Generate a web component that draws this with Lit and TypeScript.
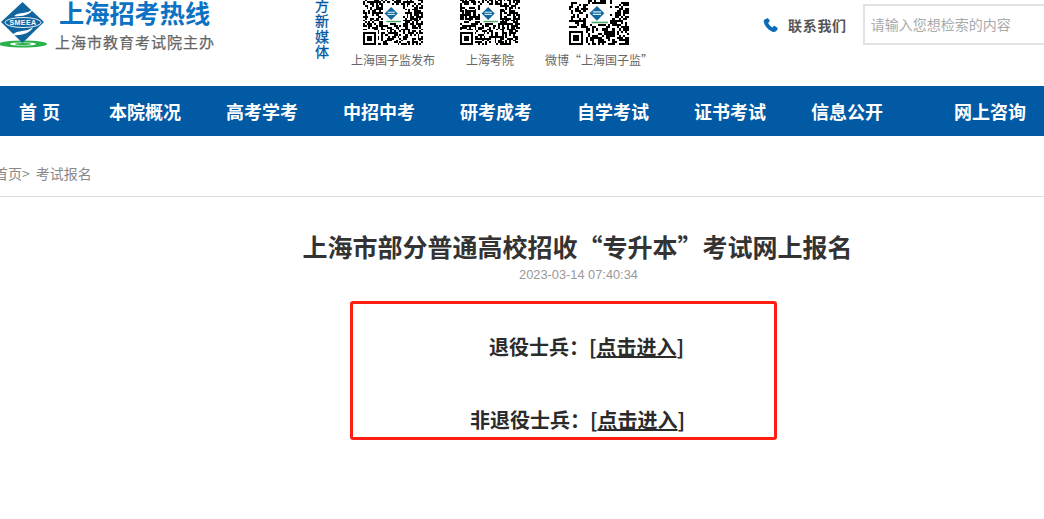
import { LitElement, html, css, svg } from "lit";
import { customElement } from "lit/decorators.js";

function qr(seed: number, cells: number) {
  let s = seed;
  const rnd = () => {
    s = (s * 1103515245 + 12345) & 0x7fffffff;
    return (s >> 12) % 100 / 100;
  };
  const rects = [];
  const inFinder = (x: number, y: number) =>
    (x < 8 && y < 8) || (x >= cells - 8 && y < 8) || (x < 8 && y >= cells - 8);
  const c = cells / 2;
  for (let y = 0; y < cells; y++) {
    for (let x = 0; x < cells; x++) {
      if (inFinder(x, y)) continue;
      if (Math.abs(x + 0.5 - c) < 5.5 && y + 0.5 > c - 5.5 && y + 0.5 < c + 5) continue;
      if (rnd() < 0.55) rects.push(svg`<rect x=${x} y=${y} width="1" height="1" fill="#000"/>`);
    }
  }
  const finder = (x: number, y: number) => svg`
    <rect x=${x} y=${y} width="7" height="7" fill="#000"/>
    <rect x=${x + 1} y=${y + 1} width="5" height="5" fill="#fff"/>
    <rect x=${x + 2} y=${y + 2} width="3" height="3" fill="#000"/>`;
  return html`<svg class="qr" viewBox="0 0 ${cells} ${cells}" shape-rendering="crispEdges">
    ${rects}
    ${finder(0, 0)}${finder(cells - 7, 0)}${finder(0, cells - 7)}
    <g shape-rendering="auto">
      <polygon points="${c - 1},${c - 4.4} ${c + 2.6},${c - 0.8} ${c - 1},${c + 2.8} ${c - 4.6},${c - 0.8}" fill="#11689f"/>
      <rect x=${c - 3} y=${c - 1.8} width="4" height="0.6" fill="#d6ecf5"/>
      <rect x=${c - 3} y=${c - 0.6} width="4" height="0.6" fill="#d6ecf5"/>
      <rect x=${c - 3.6} y=${c + 3.2} width="8" height="0.8" fill="#4fa866"/>
    </g>
  </svg>`;
}

const NAV = [
  ["首 页", "home"],
  ["本院概况", ""],
  ["高考学考", ""],
  ["中招中考", ""],
  ["研考成考", ""],
  ["自学考试", ""],
  ["证书考试", ""],
  ["信息公开", ""],
  ["网上咨询", "far"],
];

@customElement("app-root")
export class AppRoot extends LitElement {
  static styles = css`
    :host {
      display: block;
      width: 1044px;
      height: 519px;
      overflow: hidden;
      background: #fff;
      font-family: "Noto Sans CJK SC", "Liberation Sans", sans-serif;
      color: #333;
    }
    .header {
      height: 86px;
      display: flex;
      align-items: flex-start;
      overflow: hidden;
    }
    .brand {
      width: 316px;
      display: flex;
      gap: 8px;
      margin-left: -1px;
      flex: none;
    }
    .logo {
      width: 50px;
      height: 48px;
      flex: none;
      display: block;
    }
    .brand-text {
      margin-top: -6px;
      display: flex;
      flex-direction: column;
    }
    .brand-title {
      font-size: 25.2px;
      line-height: 36px;
      font-weight: 700;
      color: #0b72c4;
      margin-left: 2px;
    }
    .brand-sub {
      margin-top: 2px;
      font-size: 15px;
      line-height: 20px;
      letter-spacing: 1px;
      color: #666;
      -webkit-text-stroke: 0.25px #666;
      white-space: nowrap;
      margin-left: -2px;
    }
    .media {
      width: 14px;
      margin-top: -2.5px;
      font-size: 14px;
      line-height: 15.5px;
      color: #00569f;
      -webkit-text-stroke: 0.3px #00569f;
      flex: none;
    }
    .codes {
      display: flex;
      flex: none;
      margin-left: 22px;
      margin-top: -15px;
    }
    .code {
      display: flex;
      flex-direction: column;
      align-items: center;
      font-size: 12px;
      line-height: 16px;
      color: #666;
      white-space: nowrap;
    }
    .code.a { width: 84px; margin-right: 13px; }
    .code.b { width: 84px; margin-right: 13px; }
    .code.c { width: 108px; }
    .qr {
      width: 60px;
      height: 60px;
      display: block;
      margin-bottom: 7px;
    }
    .contact {
      margin-left: 110px;
      margin-top: 17px;
      display: flex;
      align-items: center;
      gap: 10px;
      font-size: 14px;
      font-weight: 700;
      letter-spacing: 0.7px;
      color: #555;
      height: 16px;
      white-space: nowrap;
      flex: none;
    }
    .phone { width: 15px; height: 16px; display: block; }
    .search {
      margin-left: 16px;
      margin-top: 4px;
      width: 200px;
      height: 41px;
      box-sizing: border-box;
      border: 2px solid #e2e2e2;
      padding-left: 6px;
      font-size: 14px;
      line-height: 36px;
      color: #aaa;
      white-space: nowrap;
      flex: none;
    }
    .nav {
      height: 50px;
      background: #025aa5;
      display: flex;
      align-items: center;
      padding-left: 19px;
      gap: 45px;
      color: #fff;
      font-size: 18px;
      font-weight: 700;
      white-space: nowrap;
    }
    .nav .home { margin-right: 4px; word-spacing: 1px; }
    .nav .far { margin-left: 26px; }
    .crumbs {
      height: 61px;
      box-sizing: border-box;
      border-bottom: 1px solid #ddd;
      padding-top: 14px;
      display: flex;
      align-items: center;
      gap: 6px;
      font-size: 14px;
      color: #888;
      margin-left: -6px;
      white-space: nowrap;
    }
    .article {
      display: flex;
      flex-direction: column;
      align-items: center;
      padding-left: 111px;
    }
    .title {
      margin: 30px 0 0;
      font-size: 25px;
      line-height: 38px;
      font-weight: 700;
      color: #333;
      white-space: nowrap;
    }
    .date {
      margin: 3px 0 0 2px;
      font-family: "Liberation Sans", sans-serif;
      font-size: 12.8px;
      line-height: 14px;
      color: #999;
    }
    .box {
      box-sizing: border-box;
      width: 427px;
      height: 139px;
      margin-top: 19px;
      margin-left: -28px;
      border: 3px solid #ff1e14;
      border-radius: 3px;
      display: flex;
      flex-direction: column;
      align-items: center;
      padding: 28px 0 0 28px;
      gap: 43px;
      font-size: 20px;
      line-height: 30px;
      font-weight: 700;
      color: #2b2b2b;
      white-space: nowrap;
    }
    .box .first { padding-left: 18px; }
    .box u { text-decoration: underline; }
  `;

  render() {
    return html`
      <div class="header">
        <div class="brand">
          <svg class="logo" viewBox="0 0 50 48">
            <ellipse cx="24" cy="44" rx="24" ry="3.6" fill="#2bb14b"/>
            <ellipse cx="24" cy="44" rx="13" ry="1.6" fill="#fff"/>
            <ellipse cx="24" cy="44" rx="8" ry="1" fill="#2bb14b"/>
            <polygon points="23.5,2 45,22 23.5,43 2,22" fill="#11659f"/>
            <path d="M15 16 C21 11 27 15 34 9 C32 14 25 17 15 16 Z" fill="#fff"/>
            <path d="M13 35 C19 29 27 33 34 27 C32 32 25 36 13 35 Z" fill="#fff"/>
            <ellipse cx="24" cy="22.5" rx="18" ry="5" fill="#11659f" stroke="#fff" stroke-width="0.9"/>
            <text x="24" y="25" text-anchor="middle" font-family="Liberation Sans" font-weight="700" font-size="7" fill="#fff" letter-spacing="0.4">SMEEA</text>
          </svg>
          <div class="brand-text">
            <div class="brand-title">上海招考热线</div>
            <div class="brand-sub">上海市教育考试院主办</div>
          </div>
        </div>
        <div class="media">方<br />新<br />媒<br />体</div>
        <div class="codes">
          <div class="code a">${qr(17, 33)}<span>上海国子监发布</span></div>
          <div class="code b">${qr(91, 33)}<span>上海考院</span></div>
          <div class="code c">${qr(203, 29)}<span>微博“上海国子监”</span></div>
        </div>
        <div class="contact">
          <svg class="phone" viewBox="0 0 24 24">
            <path fill="#0a6cb8" d="M6.6 1.2 L2.6 3.2 C0.8 4.4 1 7 2 9.6 C4 15 9.4 20.6 15 22.6 C17.8 23.6 20.4 22.8 21.6 21.2 L23.4 18.4 C23.8 17.6 23.6 17 23 16.4 L18.8 13.4 C18 13 17.4 13.2 16.8 13.8 L15 15.8 C12.4 14.6 9.4 11.4 8.2 8.4 L10.2 6.8 C10.8 6.2 11 5.6 10.6 4.8 L8.4 1.6 C7.9 1 7.2 0.9 6.6 1.2 Z"/>
          </svg>
          <span>联系我们</span>
        </div>
        <div class="search">请输入您想检索的内容</div>
      </div>
      <nav class="nav">
        ${NAV.map(([t, c]) => html`<span class=${c}>${t}</span>`)}
      </nav>
      <div class="crumbs"><span>首页&gt;</span><span>考试报名</span></div>
      <main class="article">
        <h1 class="title">上海市部分普通高校招收“专升本”考试网上报名</h1>
        <div class="date">2023-03-14 07:40:34</div>
        <div class="box">
          <div class="first">退役士兵：[<u>点击进入</u>]</div>
          <div class="row">非退役士兵：[<u>点击进入</u>]</div>
        </div>
      </main>
    `;
  }
}
